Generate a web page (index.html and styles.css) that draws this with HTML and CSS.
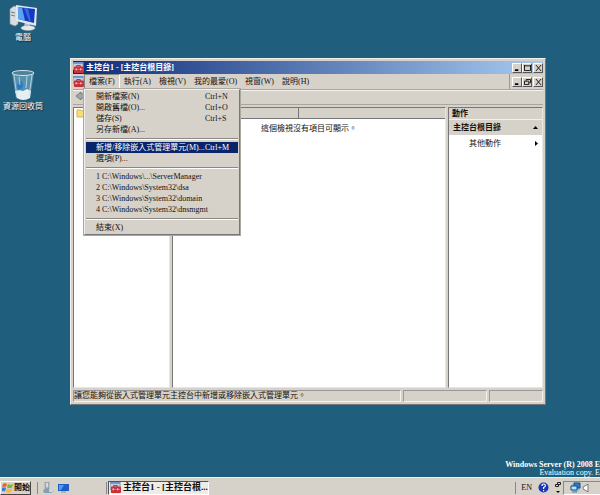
FILE: index.html
```html
<!DOCTYPE html>
<html lang="zh-Hant">
<head>
    <meta charset="UTF-8">
    <meta name="viewport" content="width=device-width, initial-scale=1.0">
    <title>主控台1</title>
    <link rel="stylesheet" href="styles.css">
</head>
<body>
    <!-- shared toolbox icon -->
    <svg class="hidden">
        <symbol id="toolbox" viewBox="0 0 12 12">
            <rect x="0" y="0" width="11" height="8" fill="#c3cfe4" stroke="#8a93a8" stroke-width="1"/>
            <rect x="0" y="0" width="11" height="2" fill="#6f8fc8"/>
            <path d="M4 6V4h4v2" fill="none" stroke="#8b2020" stroke-width="1"/>
            <rect x="1" y="5" width="11" height="7" rx="1" fill="#c9303a"/>
            <path d="M2 8h9" stroke="#dc6a6a" stroke-width="1"/>
            <rect x="3" y="7" width="1" height="2" fill="#fff"/>
            <rect x="8" y="7" width="1" height="2" fill="#fff"/>
        </symbol>
    </svg>

    <main class="desktop">
        <div class="shortcuts">
            <a class="shortcut" href="#computer">
                <svg width="30" height="28" viewBox="0 0 30 28">
                    <path d="M2 5l4-3 4 1v17l-3 2-5-2z" fill="#d9dde0" stroke="#8d979c" stroke-width=".6"/>
                    <path d="M3 8l4 1M3 11l4 1" stroke="#6f7b80"/>
                    <path d="M17 17l5 1v5h-6z" fill="#b9c2c6"/>
                    <ellipse cx="20" cy="24" rx="7" ry="2.6" fill="#e3e8ea" stroke="#9aa7ac" stroke-width=".5"/>
                    <path d="M8 1l21 3-1 18L8 17z" fill="#dfe7f0"/>
                    <path d="M10 3l17 2-1 14-16-4z" fill="#1238c4"/>
                    <path d="M10 3l4 .5 3 13-7-1.500z" fill="#5ea2f2"/>
                    <path d="M16 4l4 .5 3 13-2-.5z" fill="#3467e0"/>
                </svg>
                <span>電腦</span>
            </a>
            <a class="shortcut" href="#recycle">
                <svg width="26" height="32" viewBox="0 0 26 32">
                    <path d="M2 4l4 25q7 3 14 0l4-25z" fill="#7fb2cb" fill-opacity=".6"/>
                    <path d="M5 22l4-1 4 1 4-2 4 2-1 7q-7 4-13 0z" fill="#e6eef2"/>
                    <path d="M7 16l4-4 2 3-1 4-4 2z" fill="#2878c4" stroke="#2c86d6"/>
                    <path d="M4 6l3 22M9 8l1 8M17 7l-1 12M22 6l-3 21" stroke="#c9e2ec" stroke-width=".8" fill="none"/>
                    <ellipse cx="13" cy="4" rx="11" ry="2.5" fill="#4f8299" stroke="#d3e3e9"/>
                </svg>
                <span>資源回收筒</span>
            </a>
        </div>

        <section class="window">
            <header class="titlebar">
                <svg class="app-icon"><use href="#toolbox"/></svg>
                <h1>主控台1 - [主控台根目錄]</h1>
                <div class="controls">
                    <button aria-label="最小化"><svg viewBox="0 0 8 7"><path d="M1 6h4" stroke-width="2"/></svg></button>
                    <button aria-label="最大化"><svg viewBox="0 0 8 7"><path d="M.5 1h7M.5 0v6.5h7V0"/></svg></button>
                    <button aria-label="關閉" class="close"><svg viewBox="0 0 8 7"><path d="M1 0l6 7M7 0L1 7"/></svg></button>
                </div>
            </header>

            <nav class="menubar">
                <svg class="app-icon"><use href="#toolbox"/></svg>
                <div class="menu-root">
                    <button class="menu open">檔案(F)</button>
                    <div class="dropdown">
                        <button><span>開新檔案(N)</span><span class="key">Ctrl+N</span></button>
                        <button><span>開啟舊檔(O)...</span><span class="key">Ctrl+O</span></button>
                        <button><span>儲存(S)</span><span class="key">Ctrl+S</span></button>
                        <button><span>另存新檔(A)...</span></button>
                        <hr>
                        <button class="selected"><span>新增/移除嵌入式管理單元(M)...</span><span class="key">Ctrl+M</span></button>
                        <button><span>選項(P)...</span></button>
                        <hr>
                        <button><span>1 C:\Windows\...\ServerManager</span></button>
                        <button><span>2 C:\Windows\System32\dsa</span></button>
                        <button><span>3 C:\Windows\System32\domain</span></button>
                        <button><span>4 C:\Windows\System32\dnsmgmt</span></button>
                        <hr>
                        <button><span>結束(X)</span></button>
                    </div>
                </div>
                <button class="menu">執行(A)</button>
                <button class="menu">檢視(V)</button>
                <button class="menu">我的最愛(O)</button>
                <button class="menu">視窗(W)</button>
                <button class="menu">說明(H)</button>
                <div class="controls child">
                    <button aria-label="最小化"><svg viewBox="0 0 8 7"><path d="M1 6h4" stroke-width="2"/></svg></button>
                    <button aria-label="還原"><svg viewBox="0 0 8 7"><path d="M2.5 2V.5h5v4H6M.5 2.5h5v4h-5z"/></svg></button>
                    <button aria-label="關閉" class="close"><svg viewBox="0 0 8 7"><path d="M1 0l6 7M7 0L1 7"/></svg></button>
                </div>
            </nav>

            <div class="toolbar">
                <button aria-label="上一頁"><svg width="11" height="10" viewBox="0 0 11 10"><path d="M1 5l5-4v2h5v4H6v2z" fill="#a5a5a5" stroke="#7c7c7c"/></svg></button>
            </div>

            <div class="panes">
                <div class="pane tree">
                    <svg width="12" height="10" viewBox="0 0 12 10"><path d="M1 2h4l1 1h5v6H1z" fill="#f7dc7c" stroke="#d9b24c"/></svg>
                </div>
                <div class="pane list">
                    <div class="columns"><span></span><span></span></div>
                    <p>這個檢視沒有項目可顯示。</p>
                </div>
                <aside class="pane actions">
                    <h2>動作</h2>
                    <button class="group"><span>主控台根目錄</span><svg width="5" height="3"><path d="M0 3l2.500-3L5 3z"/></svg></button>
                    <button class="item"><span>其他動作</span><svg width="3" height="5"><path d="M0 0l3 2.500L0 5z"/></svg></button>
                </aside>
            </div>

            <footer class="statusbar">
                <span class="message">讓您能夠從嵌入式管理單元主控台中新增或移除嵌入式管理單元。</span>
                <span></span>
                <span></span>
            </footer>
        </section>

        <div class="watermark">
            <strong>Windows Server (R) 2008 E</strong>
            <span>Evaluation copy. E</span>
        </div>
    </main>

    <div class="taskbar">
        <button class="start">
            <svg width="11" height="11" viewBox="0 0 11 11">
                <path d="M1 2q2-1.500 4 0L4 5Q2 4 0 5z" fill="#e8622c"/>
                <path d="M6 2q2 1.500 5 0l-1 3.500Q7 7 5 5.500z" fill="#79b83c"/>
                <path d="M0 6q2-1.500 4 0L3 9.500q-2-1-3 0z" fill="#3a80d8"/>
                <path d="M5 6.500q2 1.500 5 0L9 10q-2 1.500-5 0z" fill="#f4bc2c"/>
            </svg>
            <span>開始</span>
        </button>
        <div class="quick">
            <button aria-label="伺服器管理員"><svg width="11" height="11" viewBox="0 0 11 11"><path d="M2 0h4v7H2z" fill="#aab6c0" stroke="#70808c" stroke-width=".5"/><path d="M3 2h2M3 4h2" stroke="#fff"/><path d="M0 8l5-2 6 3-3 2H1z" fill="#7f9fb8"/><path d="M6 7h4v3H6z" fill="#c7d5df"/></svg></button>
            <button aria-label="顯示桌面"><svg width="11" height="10" viewBox="0 0 11 10"><path d="M0 1h11v7H0z" fill="#1f5fc4"/><path d="M1 2h5L3 7H1z" fill="#4f9cf0"/><path d="M3 9h5" stroke="#8096a8"/></svg></button>
        </div>
        <button class="task">
            <svg class="app-icon"><use href="#toolbox"/></svg>
            <span>主控台1 - [主控台根...</span>
        </button>
        <div class="lang">
            <span>EN</span>
            <button aria-label="說明"><svg width="11" height="11" viewBox="0 0 11 11"><circle cx="5.500" cy="5.500" r="5" fill="#1b35b8"/><path d="M4 4q0-2 1.700-2T7.300 4Q7 5 5.600 5.500V7M5.600 8v1.200" fill="none" stroke="#fff" stroke-width="1.200"/></svg></button>
            <svg width="6" height="12" viewBox="0 0 6 12"><path d="M2.500.5h3v2h-3zM.5 2.500h3v2h-3z" fill="none" stroke="#222"/><path d="M1 9h4L3 11z" fill="#000"/></svg>
        </div>
        <div class="tray">
            <svg width="11" height="11" viewBox="0 0 11 11"><circle cx="5.500" cy="5.500" r="5" fill="#8fc4e4"/><path d="M4 1h6v5H4z" fill="#2d7cc4" stroke="#174e80"/><path d="M1 4h6v4H1z" fill="#bfe0f6" stroke="#174e80"/><path d="M2 10h5" stroke="#5f8098"/></svg>
            <svg width="7" height="10" viewBox="0 0 7 10"><path d="M6 1L3 3Q1 3 1 5t2 2l3 2z" fill="#fff" stroke="#777"/></svg>
        </div>
    </div>
</body>
</html>
```

FILE: styles.css
```css
* {
    box-sizing: border-box;
}
body {
    margin: 0;
    height: 100vh;
    display: flex;
    flex-direction: column;
    overflow: hidden;
    background-color: #1f5f7d;
    color: #111;
    font-family: "Liberation Serif", "Noto Sans CJK TC", serif;
    font-size: 8px;
    line-height: 11px;
}
button {
    font: inherit;
    color: inherit;
    background: none;
    border: 0;
    padding: 0;
    text-align: left;
    white-space: nowrap;
}
h1, h2, p {
    margin: 0;
    font-size: 8px;
}
.hidden {
    display: none;
}
.app-icon {
    width: 11px;
    height: 11px;
    flex: none;
}

/* desktop */
.desktop {
    position: relative;
    flex: 1;
    min-height: 0;
}
.shortcuts {
    width: 46px;
    display: flex;
    flex-direction: column;
    gap: 26px;
    padding-top: 4px;
}
.shortcut {
    display: flex;
    flex-direction: column;
    align-items: center;
    color: white;
    text-decoration: none;
    text-shadow: 1px 1px 1px #123;
}
.watermark {
    position: absolute;
    right: 0;
    bottom: 0;
    white-space: nowrap;
    color: white;
    line-height: 8px;
    text-align: right;
}
.watermark strong, .watermark span {
    display: block;
}

/* console window */
.window {
    position: absolute;
    left: 70px;
    top: 58px;
    width: 476px;
    height: 347px;
    display: flex;
    flex-direction: column;
    padding: 2px;
    background-color: #d6d2ca;
    border: 1px solid #f2f0ea;
    border-right-color: #777;
    border-bottom-color: #777;
}
.titlebar {
    height: 13px;
    display: flex;
    align-items: center;
    gap: 2px;
    background: linear-gradient(to right, #0c2a78, #a6caf0);
    color: white;
}
.controls {
    margin-left: auto;
    display: flex;
}
.controls button {
    width: 10px;
    height: 10px;
    display: flex;
    align-items: center;
    justify-content: center;
    background-color: #d6d2ca;
    border: 1px solid #fff;
    border-right-color: #555;
    border-bottom-color: #555;
}
.controls .close {
    margin-left: 1px;
}
.controls svg {
    width: 7px;
    height: 6px;
    fill: none;
    stroke: #000;
}
.menubar {
    height: 16px;
    display: flex;
    align-items: center;
    border-bottom: 1px solid #a9a69f;
}
.menu-root {
    position: relative;
}
.menu {
    height: 15px;
    padding: 0 4px;
}
.menu.open {
    border: 1px solid #8b8882;
    border-right-color: #fff;
    border-bottom-color: #fff;
}
.controls.child {
    height: 15px;
    align-items: center;
    padding-left: 2px;
    border-left: 1px solid #999;
}
.dropdown {
    position: absolute;
    z-index: 1;
    left: 0;
    top: 15px;
    width: 156px;
    display: flex;
    flex-direction: column;
    padding: 1px;
    background-color: #d6d2ca;
    border: 1px solid #eee;
    border-right-color: #777;
    border-bottom-color: #777;
    box-shadow: 0 0 0 1px #aaa79f;
}
.dropdown button {
    height: 11px;
    display: flex;
    justify-content: space-between;
    padding: 0 0 0 10px;
}
.dropdown .key {
    width: 33px;
}
.dropdown .selected {
    background-color: #0a246a;
    color: white;
}
.dropdown hr {
    width: 100%;
    height: 2px;
    margin: 3px 0 2px;
    border: 0;
    border-top: 1px solid #8b8882;
    border-bottom: 1px solid #fff;
}
.toolbar {
    height: 15px;
    display: flex;
    align-items: center;
    padding-left: 2px;
    border-top: 1px solid #f4f2ee;
    border-bottom: 1px solid #a9a69f;
}
.panes {
    flex: 1;
    min-height: 0;
    display: grid;
    grid-template-columns: 97px 1fr 95px;
    gap: 2px;
    padding: 2px 0;
}
.pane {
    min-width: 0;
    background-color: #fff;
    border: 1px solid #777;
    border-right-color: #e8e6e0;
    border-bottom-color: #e8e6e0;
}
.tree {
    padding-left: 2px;
}
.columns {
    height: 11px;
    display: flex;
    background-color: #d6d2ca;
    border-bottom: 1px solid #777;
}
.columns span:first-child {
    width: 126px;
    border-right: 1px solid #777;
}
.list p {
    padding-top: 4px;
    text-align: center;
}
.actions h2 {
    padding-left: 3px;
    background-color: #d6d2ca;
}
.actions button {
    width: 100%;
    height: 16px;
    display: flex;
    align-items: center;
    justify-content: space-between;
    padding: 0 4px 0 20px;
}
.actions .group {
    padding-left: 4px;
    background-color: #d6d2ca;
    border-top: 1px solid #f2f0ea;
    font-weight: bold;
}
.statusbar {
    height: 12px;
    display: grid;
    grid-template-columns: 1fr 84px 54px;
    gap: 2px;
    white-space: nowrap;
}
.statusbar span {
    border: 1px solid #999;
    border-right-color: #f4f2ee;
    border-bottom-color: #f4f2ee;
}
.statusbar .message {
    line-height: 10px;
}

/* taskbar */
.taskbar {
    height: 18px;
    flex: none;
    display: flex;
    align-items: center;
    padding-top: 2px;
    background-color: #d6d2ca;
    border-top: 1px solid #f2f0ea;
}
.start {
    height: 14px;
    width: 31px;
    display: flex;
    align-items: center;
    gap: 1px;
    padding-left: 1px;
    border: 1px solid #fff;
    border-right-color: #444;
    border-bottom-color: #444;
    font-weight: bold;
}
.quick {
    width: 70px;
    height: 12px;
    display: flex;
    align-items: center;
    gap: 4px;
    margin-left: 6px;
    padding-left: 5px;
    border-left: 1px solid #888;
    border-right: 1px solid #888;
}
.quick button, .lang button {
    display: flex;
}
.task {
    width: 101px;
    height: 14px;
    display: flex;
    align-items: center;
    gap: 2px;
    margin-left: 1px;
    padding-left: 1px;
    background-color: #eeece7;
    border: 1px solid #555;
    border-right-color: #fff;
    border-bottom-color: #fff;
    font-size: 9px;
    font-weight: bold;
}
.lang {
    height: 12px;
    display: flex;
    align-items: center;
    gap: 6px;
    margin-left: auto;
    padding: 0 2px 0 5px;
    border-left: 1px solid #888;
}
.tray {
    width: 37px;
    height: 14px;
    display: flex;
    align-items: center;
    gap: 1px;
    padding-left: 6px;
    border: 1px solid #888;
    border-right: 0;
    border-bottom-color: #fff;
}
```
